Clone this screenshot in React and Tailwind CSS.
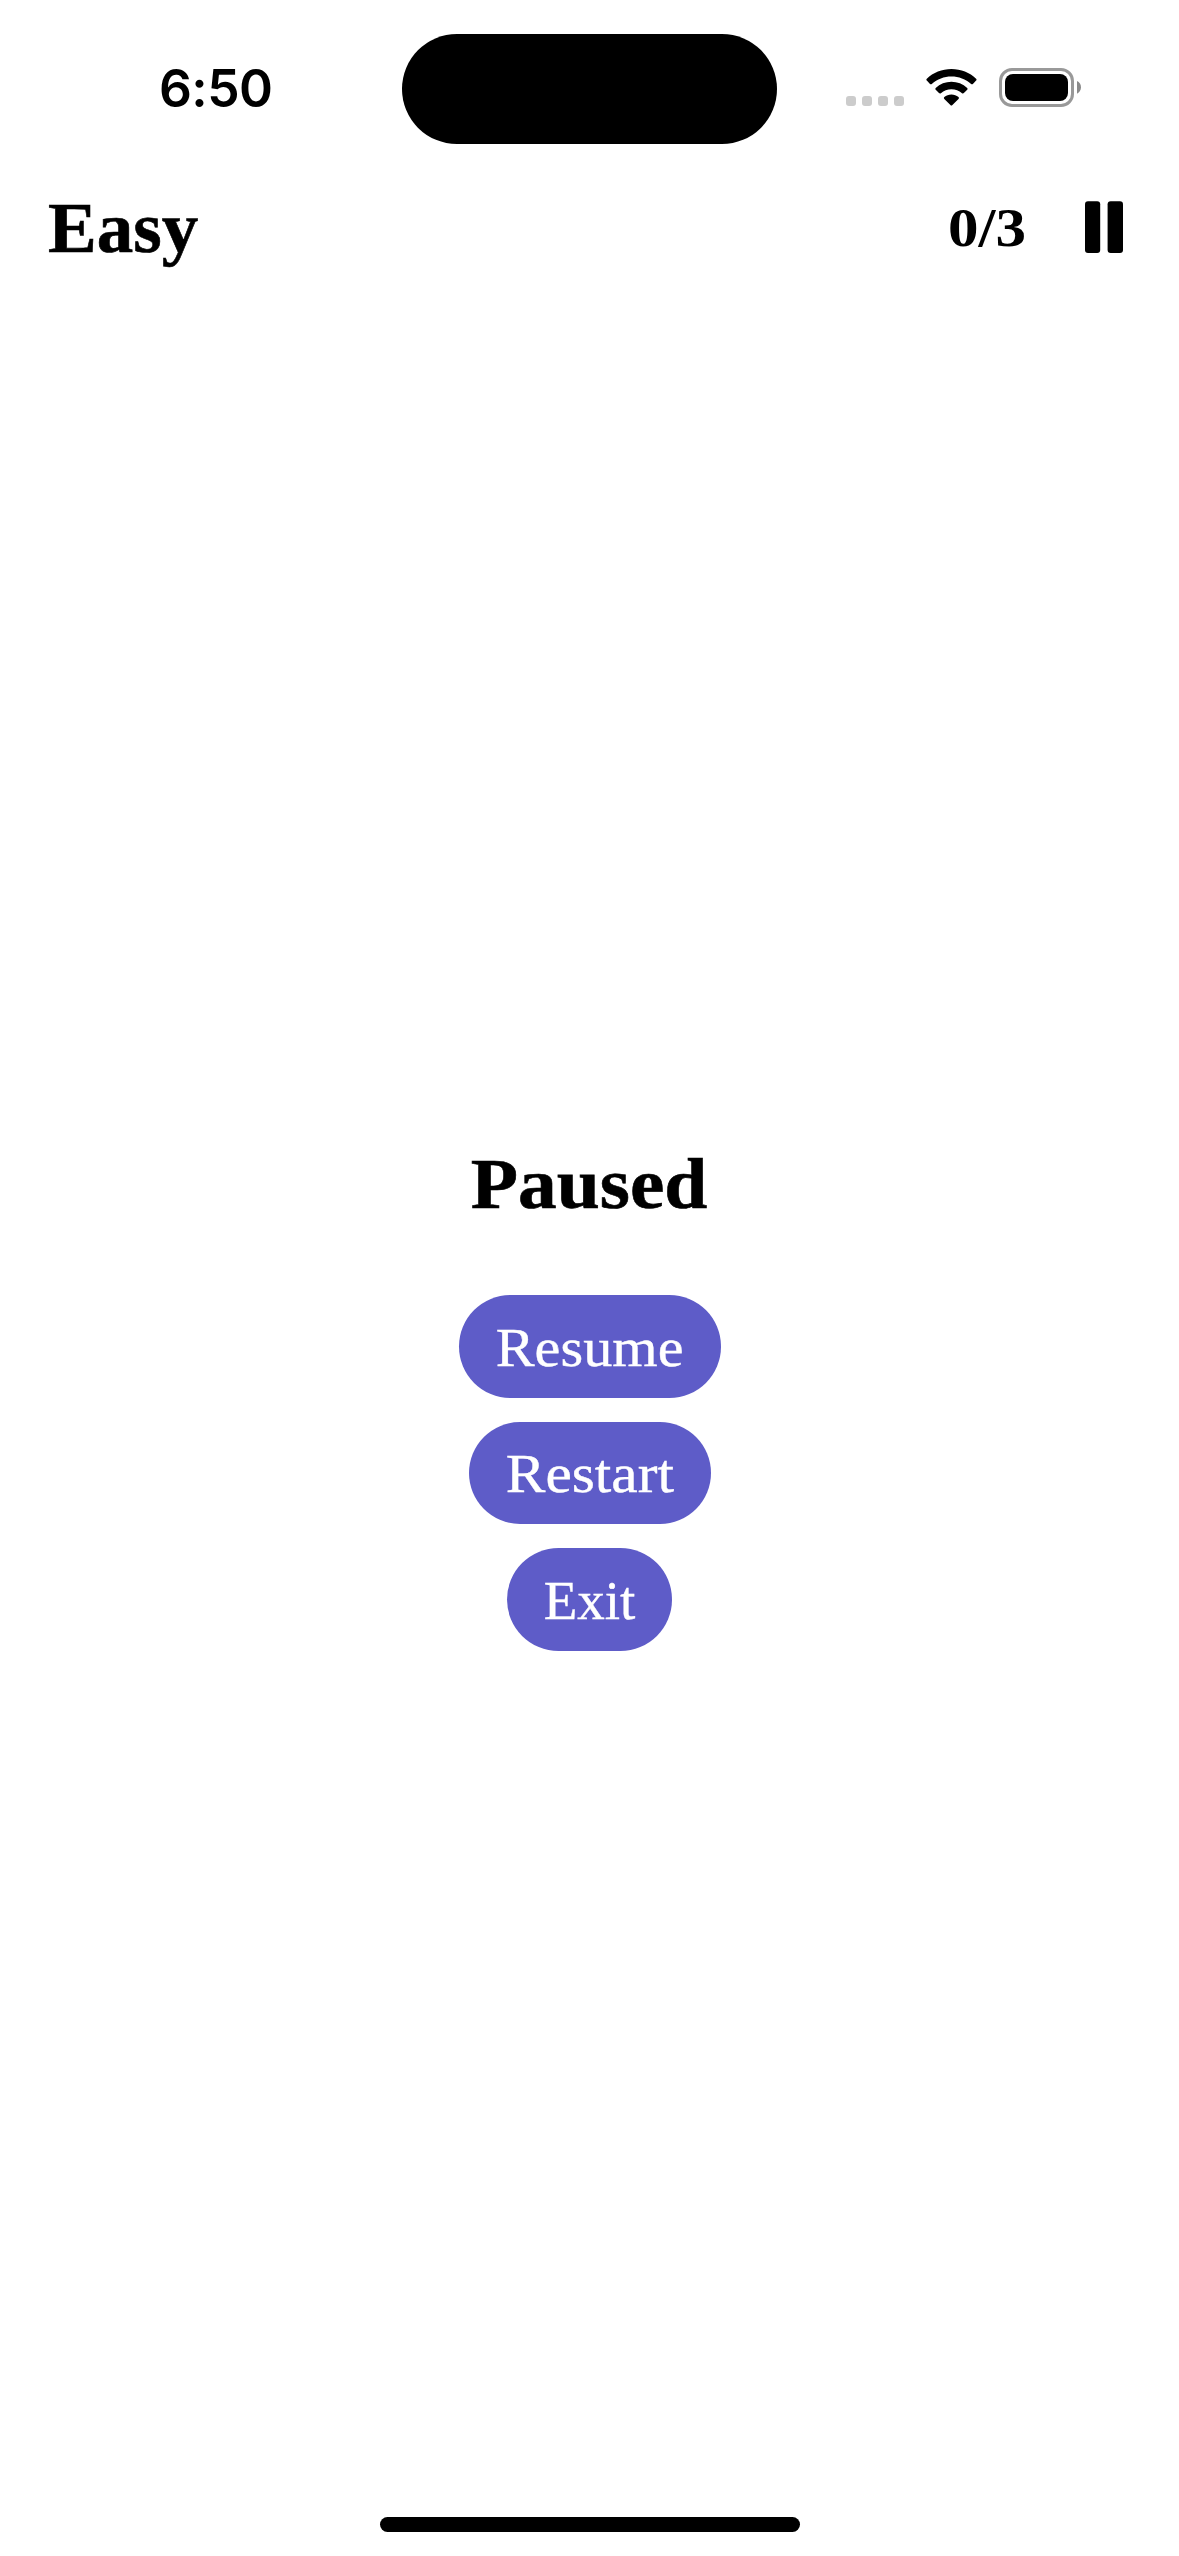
function StatusBar() {
  return (
    <div className="flex h-[177px] shrink-0 items-start">
      <div className="flex w-[402px] justify-start pt-[57px] pl-[159px]">
        <span className='font-["Inter",sans-serif] text-[51.5px] leading-[62px] font-semibold tracking-[-0.600px] whitespace-nowrap'>6:50</span>
      </div>
      <div className="mt-[34px] h-[110px] w-[375px] shrink-0 rounded-full bg-black" />
      <div className="flex pt-[68px] pl-[69px]">
        <div className="mt-7 flex gap-1.5">
          <span className="size-2.5 rounded-[3px] bg-[#cccccc]" />
          <span className="size-2.5 rounded-[3px] bg-[#cccccc]" />
          <span className="size-2.5 rounded-[3px] bg-[#cccccc]" />
          <span className="size-2.5 rounded-[3px] bg-[#cccccc]" />
        </div>
        <svg className="ml-[22px] h-[39px] w-[51px]" viewBox="0 0 51 39" fill="currentColor">
          <path d="M25.4 1C35 1 43.800 4.500 50.100 10.800Q51 11.700 50.100 12.600L46.900 15.900Q46 16.800 45.100 15.900C39.800 11 32.700 8.400 25.400 8.400C18.100 8.400 11.200 11 5.800 15.900Q4.900 16.800 4 15.900L0.800 12.600Q-0.100 11.700 0.800 10.800C7.200 4.500 16 1 25.400 1Z" />
          <path d="M25.400 13.800C31.400 13.800 36.900 16 41.200 20Q42.100 20.900 41.200 21.800L37.900 25.100Q37 26 36 25.200C33.100 22.600 29.400 21.200 25.400 21.200C21.500 21.200 17.800 22.600 14.900 25.200Q13.900 26 13 25.100L9.700 21.800Q8.800 20.900 9.700 20C14 16 19.500 13.800 25.400 13.800Z" />
          <path d="M25.400 26.400C28.100 26.400 30.500 27.300 32.500 29Q33.500 29.900 32.500 30.900L26.400 37.100Q25.400 38.100 24.400 37.100L18.300 30.900Q17.300 29.900 18.300 29C20.300 27.300 22.700 26.400 25.400 26.400Z" />
        </svg>
        <svg className="ml-[22px] h-[39px] w-[83px]" viewBox="0 0 83 39">
          <rect x="1.500" y="1.500" width="72" height="36" rx="11.500" fill="none" stroke="#999999" strokeWidth="3" />
          <rect x="6" y="6" width="63" height="27" rx="8" fill="#000" />
          <path d="M78 13C80.500 14 82 16.500 82 19.300C82 22 80.500 24.700 78 25.700Z" fill="#8a8a8a" />
        </svg>
      </div>
    </div>
  );
}

function PauseIcon() {
  return (
    <svg className="h-[52px] w-[38px]" viewBox="0 0 38 52" fill="currentColor">
      <rect x="0" y="0.300" width="15.200" height="51.700" rx="3" />
      <rect x="22.600" y="0.300" width="15.400" height="51.700" rx="3" />
    </svg>
  );
}

function PillButton({ className, children }) {
  return (
    <button className={"flex h-[102.6px] items-center justify-center rounded-full bg-[#5e5cc8] pt-[3px] " + className}>
      {children}
    </button>
  );
}

export default function App() {
  return (
    <div className="flex h-[2556px] w-[1179px] flex-col overflow-hidden bg-white font-['Liberation_Serif',serif] text-black">
      <StatusBar />
      <header className="flex h-[100px] shrink-0 items-center justify-between pr-14 pl-12">
        <h1 className="origin-left scale-x-[1.015] pt-0.5 text-[72px] leading-[80px] font-bold [-webkit-text-stroke:0.6px_black]">Easy</h1>
        <div className="flex items-center">
          <span className="mr-[59px] origin-right scale-x-[1.1] pt-0.5 text-[55.5px] leading-[64px] font-bold">0/3</span>
          <button className="block" aria-label="Pause">
            <PauseIcon />
          </button>
        </div>
      </header>
      <main className="flex grow flex-col items-center pt-[867px]">
        <h2 className="scale-x-[1.075] text-[72px] leading-[80px] font-bold [-webkit-text-stroke:0.6px_black]">Paused</h2>
        <div className="mt-[71px] flex flex-col items-center gap-[24px] text-[55px] leading-[66px] text-white">
          <PillButton className="w-[262px]">
            <span className="scale-x-[1.06] [-webkit-text-stroke:0.4px_white]">Resume</span>
          </PillButton>
          <PillButton className="w-[242px]">
            <span className="scale-x-[1.08] [-webkit-text-stroke:0.4px_white]">Restart</span>
          </PillButton>
          <PillButton className="w-[165px]">
            <span className="[-webkit-text-stroke:0.4px_white]">Exit</span>
          </PillButton>
        </div>
      </main>
      <div className="mb-6 h-[15px] w-[420px] shrink-0 self-center rounded-full bg-black" />
    </div>
  );
}
